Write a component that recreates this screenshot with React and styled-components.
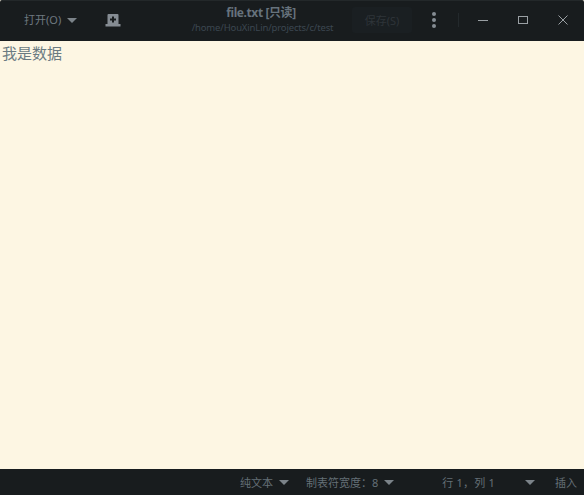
import React from "react";
import styled, { createGlobalStyle } from "styled-components";

const Global = createGlobalStyle`
  html, body { margin: 0; padding: 0; background: #fdf6e3; }
  #root { width: 584px; height: 495px; overflow: hidden; }
`;

const Win = styled.div`
  width: 584px;
  height: 495px;
  display: flex;
  flex-direction: column;
  font-family: "Noto Sans", "Noto Sans CJK SC", sans-serif;
`;

const Header = styled.header`
  height: 41px;
  flex: none;
  background: #181c1e;
  border-top: 1px solid #23282a;
  border-radius: 2px 2px 0 0;
  box-sizing: border-box;
  display: flex;
  align-items: center;
  position: relative;
`;

const MenuBtn = styled.div`
  margin-left: 24px;
  width: 53px;
  height: 18px;
  margin-top: -2px;
  display: flex;
  align-items: center;
  justify-content: space-between;
  font-size: 11px;
  line-height: 18px;
  color: #6e7880;
`;

const Tri = styled.span`
  flex: none;
  width: 0;
  height: 0;
  margin-left: ${p => p.$ml || 0}px;
  border-left: 5px solid transparent;
  border-right: 5px solid transparent;
  border-top: 5px solid #7b8389;
`;

const IconBtn = styled.div`
  margin-left: 28px;
  margin-top: -2px;
  width: 16px;
  height: 13px;
  display: flex;
`;

const Title = styled.div`
  position: absolute;
  left: 161px;
  width: 200px;
  top: 4px;
  text-align: center;
`;

const TitleMain = styled.div`
  font-size: 12px;
  font-weight: 700;
  line-height: 16px;
  letter-spacing: -0.4px;
  color: #66727c;
`;

const TitleSub = styled.div`
  font-size: 9.5px;
  line-height: 14px;
  letter-spacing: -0.15px;
  padding-left: 3px;
  color: #3c4751;
`;

const Right = styled.div`
  margin-left: auto;
  display: flex;
  align-items: center;
  height: 100%;
  padding-right: 15px;
`;

const SaveBtn = styled.div`
  width: 60px;
  height: 26px;
  margin-top: -2px;
  background: #1a1f22;
  border-radius: 3px;
  color: #2e3439;
  font-size: 11px;
  display: flex;
  align-items: center;
  justify-content: center;
`;

const Dots = styled.svg`
  margin-left: 19px;
  margin-top: -2px;
  width: 6px;
  height: 18px;
`;

const Sep = styled.div`
  margin-left: 21px;
  margin-top: -2px;
  width: 1px;
  height: 14px;
  background: #23292c;
`;

const WinIcon = styled.svg`
  width: 12px;
  height: 12px;
  margin-top: -2px;
  margin-left: ${p => p.$ml}px;
`;

const Editor = styled.main`
  flex: 1;
  background: #fdf6e3;
  color: #6b7b82;
  font-size: 15px;
  line-height: 24px;
  padding-left: 2px;
`;

const Status = styled.footer`
  height: 26px;
  flex: none;
  background: #181c1e;
  display: flex;
  align-items: center;
  font-size: 11px;
  color: #646f76;
`;

const StatusItem = styled.div`
  display: flex;
  align-items: center;
  gap: 6px;
  margin-left: ${p => p.$ml}px;
  letter-spacing: ${p => p.$ls || 0}px;
`;

export default function App() {
  return (
    <Win>
      <Global />
      <Header>
        <MenuBtn>打开(O)<Tri /></MenuBtn>
        <IconBtn>
          <svg width="16" height="13" viewBox="0 0 16 13">
            <path fill="#858c93" d="M2.5 1 Q2.5 0 3.5 0 H12.5 Q13.5 0 13.5 1 V10 H15.5 V12.5 H0.5 V10 H2.5 Z" />
            <path fill="#181c1e" d="M7 2.5 H9 V4.5 H11 V6.5 H9 V8.5 H7 V6.5 H5 V4.5 H7 Z" />
          </svg>
        </IconBtn>
        <Title>
          <TitleMain>file.txt [只读]</TitleMain>
          <TitleSub>/home/HouXinLin/projects/c/test</TitleSub>
        </Title>
        <Right>
          <SaveBtn>保存(S)</SaveBtn>
          <Dots viewBox="0 0 6 18">
            <circle cx="3" cy="3" r="2" fill="#858c93" />
            <circle cx="3" cy="9" r="2" fill="#858c93" />
            <circle cx="3" cy="15" r="2" fill="#858c93" />
          </Dots>
          <Sep />
          <WinIcon $ml={18} viewBox="0 0 12 12"><path d="M1 6.5 H11" stroke="#9aa0a4" strokeWidth="1" /></WinIcon>
          <WinIcon $ml={28} viewBox="0 0 12 12"><rect x="1.5" y="2.5" width="9" height="7" fill="none" stroke="#9aa0a4" /></WinIcon>
          <WinIcon $ml={28} viewBox="0 0 12 12"><path d="M1.5 1.5 L10.5 10.5 M10.5 1.5 L1.5 10.5" stroke="#9aa0a4" /></WinIcon>
        </Right>
      </Header>
      <Editor>我是数据</Editor>
      <Status>
        <StatusItem $ml={240}>纯文本<Tri /></StatusItem>
        <StatusItem $ml={17}>制表符宽度：8<Tri /></StatusItem>
        <StatusItem $ml={48} $ls={0.2}>行 1，列 1</StatusItem>
        <Tri $ml={30} />
        <StatusItem $ml={20}>插入</StatusItem>
      </Status>
    </Win>
  );
}
